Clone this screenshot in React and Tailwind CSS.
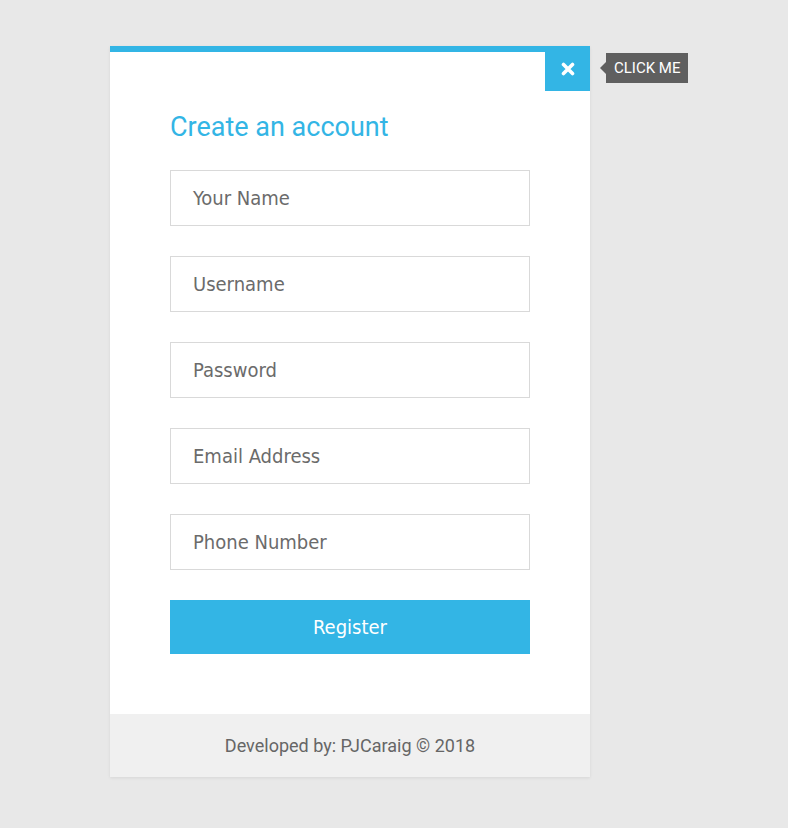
import React from 'react';

const fields = ['Your Name', 'Username', 'Password', 'Email Address', 'Phone Number'];

const App = () => {
  return (
    <div className="min-h-[828px] w-full bg-[#e8e8e8] pt-[46px] pl-[110px]" style={{ fontFamily: 'Roboto, sans-serif' }}>
      <div className="relative w-[480px] bg-white border-t-[6px] border-[#33b5e5] shadow-[0_1px_3px_rgba(0,0,0,0.08)]">
        {/* close button */}
        <button className="absolute -top-[6px] right-0 w-[45px] h-[45px] bg-[#33b5e5] flex items-center justify-center">
          <svg width="14" height="14" viewBox="0 0 14 14">
            <path d="M2.5 2.5 L11.5 11.5 M11.5 2.5 L2.5 11.5" stroke="#fff" strokeWidth="3.6" strokeLinecap="round" />
          </svg>
        </button>

        {/* tooltip */}
        <div className="absolute top-[1px] left-[496px] h-[30px] bg-[#5f5f5f] text-white text-[15px] leading-[30px] px-[8px] whitespace-nowrap">
          <span className="absolute -left-[6px] top-[9px] w-0 h-0 border-y-[6px] border-y-transparent border-r-[6px] border-r-[#5f5f5f]"></span>
          CLICK ME
        </div>

        <div className="flex flex-col gap-[30px] px-[60px] pt-[61px] pb-[60px]">
          <h2 className="text-[27px] leading-[28px] text-[#33b5e5] -mb-[1px]">Create an account</h2>

          {fields.map((f) => (
            <div
              key={f}
              className="h-[56px] border border-[#d9d9d9] flex items-center pl-[22px] text-[20px] text-[#6b6b6b]"
              style={{ fontFamily: '"DejaVu Sans Condensed", "DejaVu Sans", sans-serif' }}
            >
              {f}
            </div>
          ))}

          <button
            className="w-full h-[54px] bg-[#33b5e5] text-white text-[20px]"
            style={{ fontFamily: '"DejaVu Sans Condensed", "DejaVu Sans", sans-serif' }}
          >
            Register
          </button>
        </div>

        <div className="h-[63px] bg-[#f0f0f0] flex items-center justify-center text-[18px] text-[#666]">
          Developed by: PJCaraig © 2018
        </div>
      </div>
    </div>
  );
};

export default App;
